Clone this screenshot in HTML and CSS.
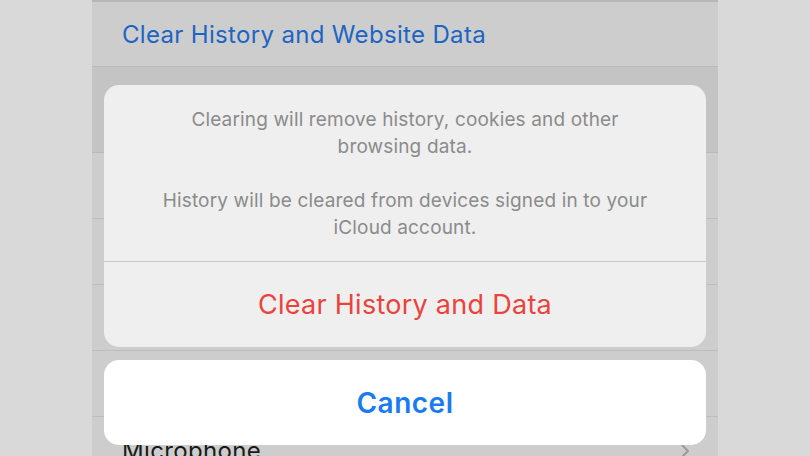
FILE: index.html
```html
<!DOCTYPE html>
<html>
<head>
<meta charset="utf-8">
<link rel="stylesheet" href="styles.css">
</head>
<body>
<div class="screen">
  <div class="side"></div>
  <div class="phone">
    <div class="list">
      <div class="topline"></div>
      <div class="row row-first"><span class="link">Clear History and Website Data</span></div>
      <div class="gap"></div>
      <div class="group">
        <div class="row inset"></div>
        <div class="row inset"></div>
        <div class="row inset"></div>
        <div class="row inset"></div>
        <div class="row inset"><span class="label">Microphone</span><span class="chev">
          <svg width="10" height="16" viewBox="0 0 10 16"><path d="M2 2l6 6-6 6" fill="none" stroke="#9a9a9a" stroke-width="2" stroke-linecap="round" stroke-linejoin="round"/></svg>
        </span></div>
      </div>
    </div>
    <div class="sheet">
      <div class="alert">
        <div class="message">
          <p>Clearing will remove history, cookies and other<br>browsing data.</p>
          <p>History will be cleared from devices signed in to your<br>iCloud account.</p>
        </div>
        <div class="action destructive">Clear History and Data</div>
      </div>
      <div class="cancel">Cancel</div>
    </div>
  </div>
  <div class="side"></div>
</div>
</body>
</html>
```
FILE: styles.css
```css
html, body {
  margin: 0;
  padding: 0;
  width: 810px;
  height: 456px;
  overflow: hidden;
  background: #d9d9d9;
  font-family: Inter, "Liberation Sans", sans-serif;
}
.screen {
  display: flex;
  width: 810px;
  height: 456px;
}
.side {
  flex: 0 0 92px;
  background: #d9d9d9;
}
.phone {
  position: relative;
  flex: 0 0 626px;
  background: #cdcdcd;
  overflow: hidden;
}
.list {
  display: flex;
  flex-direction: column;
}
.topline {
  height: 2px;
  background: #b7b7b7;
}
.row {
  height: 66px;
  display: flex;
  align-items: center;
  padding-left: 30px;
  background: #cdcdcd;
  box-sizing: border-box;
  position: relative;
}
.row-first {
  height: 65px;
  border-bottom: 1px solid #bababa;
}
.link {
  color: #1d65c4;
  font-size: 24px;
  letter-spacing: 0.33px;
}
.gap {
  height: 85px;
  background: #c4c4c4;
  border-bottom: 1px solid #b9b9b9;
}
.group .inset {
  border-bottom: 1px solid #bdbdbd;
}
.label {
  color: #1a1a1a;
  font-size: 24px;
  letter-spacing: 0.33px;
  margin-top: 2px;
}
.chev {
  position: absolute;
  right: 28px;
  top: 26px;
}
.sheet {
  position: absolute;
  left: 12px;
  top: 85px;
  width: 602px;
  display: flex;
  flex-direction: column;
  gap: 13px;
}
.alert {
  background: #efefef;
  border-radius: 15px;
  overflow: hidden;
}
.message {
  padding: 21px 20px 20px;
  border-bottom: 1px solid #c9c9c9;
  text-align: center;
  color: #8b8b8b;
  font-size: 19px;
  letter-spacing: 0.15px;
  line-height: 27px;
}
.message p {
  margin: 0;
}
.message p + p {
  margin-top: 27px;
}
.action {
  height: 85px;
  display: flex;
  align-items: center;
  justify-content: center;
  font-size: 27px;
  letter-spacing: 0.27px;
}
.destructive {
  color: #e9433b;
}
.cancel {
  height: 85px;
  background: #ffffff;
  border-radius: 15px;
  display: flex;
  align-items: center;
  justify-content: center;
  color: #1a7bef;
  font-size: 28px;
  letter-spacing: 0.5px;
  font-weight: 600;
}
```
